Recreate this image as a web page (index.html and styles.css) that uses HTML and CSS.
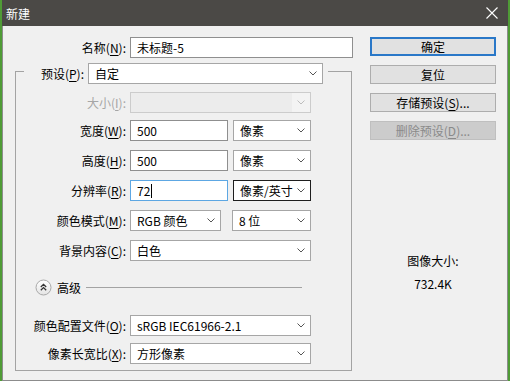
FILE: index.html
```html
<!DOCTYPE html>
<html lang="zh-CN">
<head>
  <meta charset="UTF-8">
  <title>新建</title>
  <link rel="stylesheet" href="styles.css">
</head>
<body>
<div class="window">
  <div class="titlebar">
    <span class="title">新建</span>
    <svg class="close" width="12" height="12" viewBox="0 0 12 12"><path d="M0.5 0.5L11.5 11.5M11.5 0.5L0.5 11.5" stroke="#fff" stroke-width="1.1" fill="none"/></svg>
  </div>
  <div class="body">
    <div class="main">
      <div class="name-row">
        <label class="label">名称(<u>N</u>):</label>
        <div class="field name">未标题-5</div>
      </div>
      <fieldset class="group">
        <legend class="preset">
          <div class="preset-inner">
            <label class="label">预设(<u>P</u>):</label>
            <div class="field select w-preset"><span>自定</span><svg class="arrow" width="8" height="5" viewBox="0 0 8 5"><path d="M0.5 0.5L4 4L7.5 0.5"/></svg></div>
          </div>
        </legend>

        <div class="row">
          <label class="label is-disabled">大小(<u>I</u>):</label>
          <div class="field select w-full is-disabled"><span></span><span class="arrow-box"><svg class="arrow" width="8" height="5" viewBox="0 0 8 5"><path d="M0.5 0.5L4 4L7.5 0.5"/></svg></span></div>
        </div>
        <div class="row tight">
          <label class="label">宽度(<u>W</u>):</label>
          <div class="field w-num">500</div>
          <div class="field select w-unit"><span>像素</span><svg class="arrow" width="8" height="5" viewBox="0 0 8 5"><path d="M0.5 0.5L4 4L7.5 0.5"/></svg></div>
        </div>
        <div class="row">
          <label class="label">高度(<u>H</u>):</label>
          <div class="field w-num">500</div>
          <div class="field select w-unit"><span>像素</span><svg class="arrow" width="8" height="5" viewBox="0 0 8 5"><path d="M0.5 0.5L4 4L7.5 0.5"/></svg></div>
        </div>
        <div class="row">
          <label class="label">分辨率(<u>R</u>):</label>
          <div class="field w-num is-focus"><span>72</span><span class="caret"></span></div>
          <div class="field select w-unit is-hover"><span>像素/英寸</span><svg class="arrow" width="8" height="5" viewBox="0 0 8 5"><path d="M0.5 0.5L4 4L7.5 0.5"/></svg></div>
        </div>
        <div class="row">
          <label class="label">颜色模式(<u>M</u>):</label>
          <div class="field select w-mode"><span>RGB 颜色</span><svg class="arrow" width="8" height="5" viewBox="0 0 8 5"><path d="M0.5 0.5L4 4L7.5 0.5"/></svg></div>
          <div class="field select w-bits"><span>8 位</span><svg class="arrow" width="8" height="5" viewBox="0 0 8 5"><path d="M0.5 0.5L4 4L7.5 0.5"/></svg></div>
        </div>
        <div class="row">
          <label class="label">背景内容(<u>C</u>):</label>
          <div class="field select w-full"><span>白色</span><svg class="arrow" width="8" height="5" viewBox="0 0 8 5"><path d="M0.5 0.5L4 4L7.5 0.5"/></svg></div>
        </div>

        <div class="advanced">
          <svg class="toggle" width="17" height="17" viewBox="0 0 17 17">
            <defs>
              <linearGradient id="tg" x1="0" y1="0" x2="0" y2="1">
                <stop offset="0" stop-color="#ffffff"/>
                <stop offset="1" stop-color="#e4e4e4"/>
              </linearGradient>
            </defs>
            <circle cx="8.5" cy="8.5" r="7.5" fill="url(#tg)" stroke="#a9a9a9"/>
            <path d="M5.8 8L8.5 5.4L11.2 8M5.8 11.2L8.5 8.6L11.2 11.2" fill="none" stroke="#333" stroke-width="1.3"/>
          </svg>
          <span class="adv-text">高级</span>
          <span class="adv-line"></span>
        </div>

        <div class="row profile">
          <label class="label">颜色配置文件(<u>O</u>):</label>
          <div class="field select w-full"><span>sRGB IEC61966-2.1</span><svg class="arrow" width="8" height="5" viewBox="0 0 8 5"><path d="M0.5 0.5L4 4L7.5 0.5"/></svg></div>
        </div>
        <div class="row tight">
          <label class="label">像素长宽比(<u>X</u>):</label>
          <div class="field select w-full"><span>方形像素</span><svg class="arrow" width="8" height="5" viewBox="0 0 8 5"><path d="M0.5 0.5L4 4L7.5 0.5"/></svg></div>
        </div>
      </fieldset>
    </div>

    <div class="side">
      <ul class="buttons">
        <li class="btn is-default">确定</li>
        <li class="btn">复位</li>
        <li class="btn">存储预设(<u>S</u>)...</li>
        <li class="btn is-disabled">删除预设(<u>D</u>)...</li>
      </ul>
      <div class="info">
        <p>图像大小:</p>
        <p>732.4K</p>
      </div>
    </div>
  </div>
</div>
</body>
</html>
```

FILE: styles.css
```css
*{ margin: 0; padding: 0; box-sizing: border-box;}
body{ width: 510px; height: 385px; overflow: hidden; font-family: "Noto Sans CJK SC", "Microsoft YaHei", sans-serif; font-size: 12px; color: #000; background: linear-gradient(#4f9b36 0 381px, #fff 381px);}
ul,li{ list-style: none;}
u{ text-decoration: underline; text-underline-offset: 2px;}

.window{ width: 506px; height: 381px; margin-left: 2px; background: #f0f0f0; border: 1px solid #8c8c8c; border-top: 0; display: flex; flex-direction: column;}
.titlebar{ height: 26px; margin: 0 -1px; padding: 0 10px 0 4px; background: #4b4946; color: #fff; display: flex; align-items: center; justify-content: space-between;}
.titlebar .title{ font-size: 12px;}
.titlebar .close{ width: 12px; height: 12px;}

.body{ flex: 1; display: flex; gap: 17px; padding: 11px 11px 0 12px;}
.main{ width: 338px;}

.label{ text-align: right; white-space: nowrap;}
.label.is-disabled{ color: #a6a6a6;}

.field{ height: 21px; display: flex; align-items: center; padding: 0 6px; background: #fff; border: 1px solid #8f8f8f; white-space: nowrap;}
.field.select{ justify-content: space-between; padding-right: 5px; border-color: #a6a6a6;}
.field .arrow{ flex: none; fill: none; stroke: #555;}
.field.is-focus{ border-color: #5da7e3;}
.field.is-hover{ border-color: #1e1e1e;}
.field.is-disabled{ background: #ececec; border-color: #cccccc; padding-right: 0;}
.field.is-disabled .arrow-box{ height: 100%; width: 18px; display: flex; align-items: center; justify-content: center; background: #f3f3f3;}
.field.is-disabled .arrow{ stroke: #bdbdbd;}
.caret{ width: 1px; height: 14px; margin-left: 1px; background: #000;}

.name-row{ display: flex; align-items: center; height: 21px;}
.name-row .label{ width: 111px; margin-right: 4px;}
.name-row .field{ width: 223px;}

.group{ width: 337px; border: 1px solid #a3a3a3; padding: 8px 0 6px; min-inline-size: 0;}
.preset{ margin-left: 8px; padding: 5px 5px 0 13px;}
.preset-inner{ display: flex; align-items: center;}
.preset .label{ width: 47px; margin-right: 4px;}
.w-preset{ width: 235px;}

.row{ display: flex; align-items: center; height: 21px; margin-top: 9px;}
.row:first-of-type{ margin-top: 0;}
.row.tight{ margin-top: 7px;}
.row.profile{ margin-top: 19px;}
.row .label{ width: 110px; margin-right: 4px;}
.w-full{ width: 181px;}
.w-num{ width: 98px;}
.w-unit{ width: 78px; margin-left: 5px;}
.w-mode{ width: 91px;}
.w-bits{ width: 79px; margin-left: 11px;}

.advanced{ display: flex; align-items: center; height: 17px; margin-top: 18px; padding: 0 49px 0 19px;}
.advanced .toggle{ flex: none;}
.adv-text{ margin-left: 5px;}
.adv-line{ flex: 1; height: 1px; margin-left: 5px; background: #a3a3a3;}

.side{ width: 126px;}
.buttons{ display: flex; flex-direction: column; gap: 9px;}
.btn{ height: 19px; display: flex; align-items: center; justify-content: center; background: #e1e1e1; border: 1px solid #adadad;}
.btn.is-default{ border: 2px solid #2a78c8;}
.btn.is-disabled{ background: #cccccc; border-color: #bfbfbf; color: #8a8a8a;}
.info{ margin-top: 109px; text-align: center; line-height: 23px;}
```
